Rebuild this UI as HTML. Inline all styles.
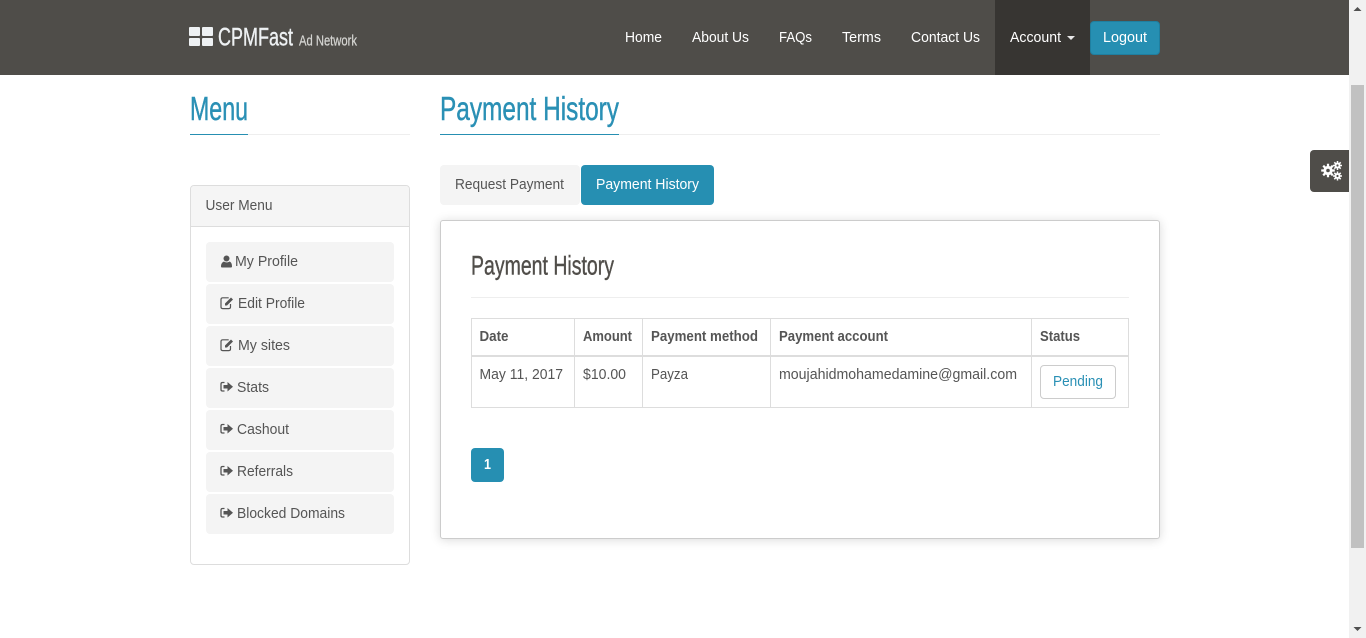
<!DOCTYPE html>
<html lang="en">
<head>
<meta charset="utf-8">
<title>Payment History</title>
<style>
html,body{margin:0;padding:0;width:1366px;height:638px;overflow:hidden;background:#fff}
.b{position:absolute;box-sizing:border-box}
.item{left:206px;width:188px;height:40px;background:#f4f4f4;border-radius:4px}
svg.t{position:absolute;left:0;top:0}
text{font-family:"Liberation Sans",sans-serif;font-size:14.5px;fill:#555}
.n{fill:#fff}
.h{fill:#2a90b5}
.o{font-size:33px;stroke:#2a90b5;stroke-width:.45px}
th,td{padding:0;border:1px solid #ddd;box-sizing:border-box}
th{border-bottom:2px solid #ddd}
</style>
</head>
<body>
<div class="b" style="left:0;top:0;width:1349px;height:75px;background:#4f4d49"></div>
<div class="b" style="left:995px;top:0;width:95px;height:75px;background:#373532"></div>
<div class="b" style="left:1090px;top:21px;width:70px;height:34px;background:#268fb2;border:1px solid #1f7fa0;border-radius:4px"></div>
<div class="b" style="left:189px;top:27px;width:11px;height:9px;background:#eef1f3;border-radius:1px"></div>
<div class="b" style="left:202px;top:27px;width:11px;height:9px;background:#eef1f3;border-radius:1px"></div>
<div class="b" style="left:189px;top:38px;width:11px;height:8px;background:#eef1f3;border-radius:1px"></div>
<div class="b" style="left:202px;top:38px;width:11px;height:8px;background:#eef1f3;border-radius:1px"></div>

<div class="b" style="left:190px;top:134px;width:220px;height:1px;background:#eee"></div>
<div class="b" style="left:190px;top:134px;width:58px;height:1px;background:#268fb2"></div>
<div class="b" style="left:440px;top:134px;width:720px;height:1px;background:#eee"></div>
<div class="b" style="left:440px;top:134px;width:179px;height:1px;background:#268fb2"></div>

<div class="b" style="left:190px;top:185px;width:220px;height:380px;border:1px solid #ddd;border-radius:4px;background:#fff"></div>
<div class="b" style="left:191px;top:186px;width:218px;height:41px;background:#f5f5f5;border-bottom:1px solid #ddd;border-radius:3px 3px 0 0"></div>
<div class="b item" style="top:242px"></div>
<div class="b item" style="top:284px"></div>
<div class="b item" style="top:326px"></div>
<div class="b item" style="top:368px"></div>
<div class="b item" style="top:410px"></div>
<div class="b item" style="top:452px"></div>
<div class="b item" style="top:494px"></div>

<div class="b" style="left:440px;top:165px;width:140px;height:40px;background:#f4f4f4;border-radius:4px"></div>
<div class="b" style="left:581px;top:165px;width:133px;height:40px;background:#268fb2;border-radius:4px"></div>

<div class="b" style="left:440px;top:220px;width:720px;height:319px;background:#fff;border:1px solid #ccc;border-radius:3px;box-shadow:0 1px 10px rgba(0,0,0,.15)"></div>
<div class="b" style="left:471px;top:297px;width:658px;height:1px;background:#eee"></div>

<table class="b" style="left:471px;top:318px;width:657px;height:90px;border-collapse:collapse;table-layout:fixed">
<colgroup><col style="width:103px"><col style="width:68px"><col style="width:128px"><col style="width:261px"><col style="width:97px"></colgroup>
<tr style="height:37px"><th></th><th></th><th></th><th></th><th></th></tr>
<tr style="height:52px"><td></td><td></td><td></td><td></td><td></td></tr>
</table>
<div class="b" style="left:1040px;top:365px;width:76px;height:34px;background:#fff;border:1px solid #ccc;border-radius:4px"></div>
<div class="b" style="left:471px;top:448px;width:33px;height:34px;background:#268fb2;border-radius:4px"></div>

<div class="b" style="left:1310px;top:150px;width:39px;height:42px;background:#4f4d49;border-radius:4px 0 0 4px"></div>

<div class="b" style="left:1349px;top:0;width:17px;height:638px;background:#f1f1f1"></div>
<div class="b" style="left:1351px;top:85px;width:13px;height:463px;background:#c1c1c1"></div>

<svg class="t" width="1366" height="638" viewBox="0 0 1366 638">
<text class="n" x="625" y="42" textLength="37" lengthAdjust="spacingAndGlyphs">Home</text>
<text class="n" x="692" y="42" textLength="57" lengthAdjust="spacingAndGlyphs">About Us</text>
<text class="n" x="779" y="42" textLength="33" lengthAdjust="spacingAndGlyphs">FAQs</text>
<text class="n" x="842" y="42" textLength="39" lengthAdjust="spacingAndGlyphs">Terms</text>
<text class="n" x="911" y="42" textLength="69" lengthAdjust="spacingAndGlyphs">Contact Us</text>
<text class="n" x="1010" y="42" textLength="51" lengthAdjust="spacingAndGlyphs">Account</text>
<path d="M1067 36h8l-4 4z" fill="#e8e8e8"/>
<text class="n" x="1103" y="42" textLength="44" lengthAdjust="spacingAndGlyphs">Logout</text>
<text style="font-size:25px;fill:#eef1f3;stroke:#eef1f3;stroke-width:.4px" x="218" y="45.500" textLength="75" lengthAdjust="spacingAndGlyphs">CPMFast</text>
<text style="font-size:15px;fill:#d5d5d2;stroke:#d5d5d2;stroke-width:.25px" x="299" y="45.500" textLength="58" lengthAdjust="spacingAndGlyphs">Ad Network</text>

<text class="o h" x="190" y="120" textLength="58" lengthAdjust="spacingAndGlyphs">Menu</text>
<text class="o h" x="440" y="120" textLength="179" lengthAdjust="spacingAndGlyphs">Payment History</text>

<text x="205.500" y="210" textLength="67" lengthAdjust="spacingAndGlyphs">User Menu</text>

<path d="M221 266.500c0-3 1.500-4.500 3-5 1.500 1.200 4 1.200 5.500 0 1.500.5 2.500 2 2.500 5 0 .8-.6 1-1.200 1h-8.600c-.7 0-1.200-.3-1.200-1zM226.500 255.500a3 3 0 1 1 0 6a3 3 0 1 1 0-6z" fill="#555"/>
<text x="235" y="266" textLength="63" lengthAdjust="spacingAndGlyphs">My Profile</text>

<path d="M230.500 304v3c0 1-.7 1.600-1.700 1.600h-6.100c-1 0-1.700-.6-1.700-1.600v-7.500c0-1 .7-1.700 1.700-1.700h6" fill="none" stroke="#555" stroke-width="1.200"/>
<path d="M225 303.500l6-6 2 2-6 6h-2z" fill="#555"/>
<text x="238" y="308" textLength="67" lengthAdjust="spacingAndGlyphs">Edit Profile</text>

<path d="M230.500 346v3c0 1-.7 1.600-1.700 1.600h-6.100c-1 0-1.700-.6-1.700-1.600v-7.500c0-1 .7-1.700 1.700-1.700h6" fill="none" stroke="#555" stroke-width="1.200"/>
<path d="M225 345.500l6-6 2 2-6 6h-2z" fill="#555"/>
<text x="238" y="350" textLength="52" lengthAdjust="spacingAndGlyphs">My sites</text>

<path d="M224.500 382.500h-2c-1 0-1.500.6-1.500 1.500v5.500c0 1 .5 1.500 1.500 1.500h2" fill="none" stroke="#555" stroke-width="1.300"/><path d="M223.500 385h4v-3l5.500 4.700-5.500 4.800v-3h-4z" fill="#555"/>
<text x="237" y="392" textLength="32" lengthAdjust="spacingAndGlyphs">Stats</text>

<path d="M224.500 424.500h-2c-1 0-1.500.6-1.500 1.500v5.500c0 1 .5 1.500 1.500 1.500h2" fill="none" stroke="#555" stroke-width="1.300"/><path d="M223.500 427h4v-3l5.500 4.700-5.500 4.800v-3h-4z" fill="#555"/>
<text x="237" y="434" textLength="52" lengthAdjust="spacingAndGlyphs">Cashout</text>

<path d="M224.500 466.500h-2c-1 0-1.500.6-1.500 1.500v5.500c0 1 .5 1.500 1.500 1.500h2" fill="none" stroke="#555" stroke-width="1.300"/><path d="M223.500 469h4v-3l5.500 4.700-5.500 4.800v-3h-4z" fill="#555"/>
<text x="237" y="476" textLength="56" lengthAdjust="spacingAndGlyphs">Referrals</text>

<path d="M224.500 508.500h-2c-1 0-1.500.6-1.500 1.500v5.500c0 1 .5 1.500 1.500 1.500h2" fill="none" stroke="#555" stroke-width="1.300"/><path d="M223.500 511h4v-3l5.500 4.700-5.500 4.800v-3h-4z" fill="#555"/>
<text x="237" y="518" textLength="108" lengthAdjust="spacingAndGlyphs">Blocked Domains</text>

<text x="455" y="189" textLength="109" lengthAdjust="spacingAndGlyphs">Request Payment</text>
<text class="n" x="596" y="189" textLength="103" lengthAdjust="spacingAndGlyphs">Payment History</text>

<text style="font-size:27px;fill:#514e4a;stroke:#514e4a;stroke-width:.4px" x="471" y="274.500" textLength="143" lengthAdjust="spacingAndGlyphs">Payment History</text>

<text font-weight="700" x="479.500" y="341" textLength="29" lengthAdjust="spacingAndGlyphs">Date</text>
<text font-weight="700" x="583" y="341" textLength="49" lengthAdjust="spacingAndGlyphs">Amount</text>
<text font-weight="700" x="651" y="341" textLength="107" lengthAdjust="spacingAndGlyphs">Payment method</text>
<text font-weight="700" x="779" y="341" textLength="109" lengthAdjust="spacingAndGlyphs">Payment account</text>
<text font-weight="700" x="1040" y="341" textLength="40" lengthAdjust="spacingAndGlyphs">Status</text>

<text x="479.500" y="379" textLength="83.500" lengthAdjust="spacingAndGlyphs">May 11, 2017</text>
<text x="583" y="379" textLength="43" lengthAdjust="spacingAndGlyphs">$10.00</text>
<text x="651" y="379" textLength="37" lengthAdjust="spacingAndGlyphs">Payza</text>
<text x="779" y="379" textLength="238" lengthAdjust="spacingAndGlyphs">moujahidmohamedamine@gmail.com</text>
<text class="h" x="1053" y="386" textLength="50" lengthAdjust="spacingAndGlyphs">Pending</text>
<text class="n" font-weight="700" x="484" y="469" textLength="7" lengthAdjust="spacingAndGlyphs">1</text>

<g fill="#fff">
<circle cx="1328" cy="170.500" r="4.600"/>
<path d="M1328 163.700v13.600M1321.200 170.500h13.600M1323.200 165.700l9.600 9.600M1332.800 165.700l-9.600 9.600" stroke="#fff" stroke-width="2.200"/>
<circle cx="1328" cy="170.500" r="1.800" fill="#4f4d49"/>
<circle cx="1337.500" cy="165.500" r="3"/>
<circle cx="1337.500" cy="176" r="3"/>
<path d="M1337.500 161v9M1333 165.500h9M1334.300 162.300l6.400 6.400M1340.700 162.300l-6.400 6.400M1337.500 171.500v9M1333 176h9M1334.300 172.800l6.400 6.400M1340.700 172.800l-6.400 6.400" stroke="#fff" stroke-width="1.500"/>
<circle cx="1337.500" cy="165.500" r="1.100" fill="#4f4d49"/>
<circle cx="1337.500" cy="176" r="1.100" fill="#4f4d49"/>
</g>

<path d="M1357.500 7l4 4h-8z" fill="#505050"/>
<path d="M1353.500 627h8l-4 4z" fill="#505050"/>
</svg>
</body>
</html>
